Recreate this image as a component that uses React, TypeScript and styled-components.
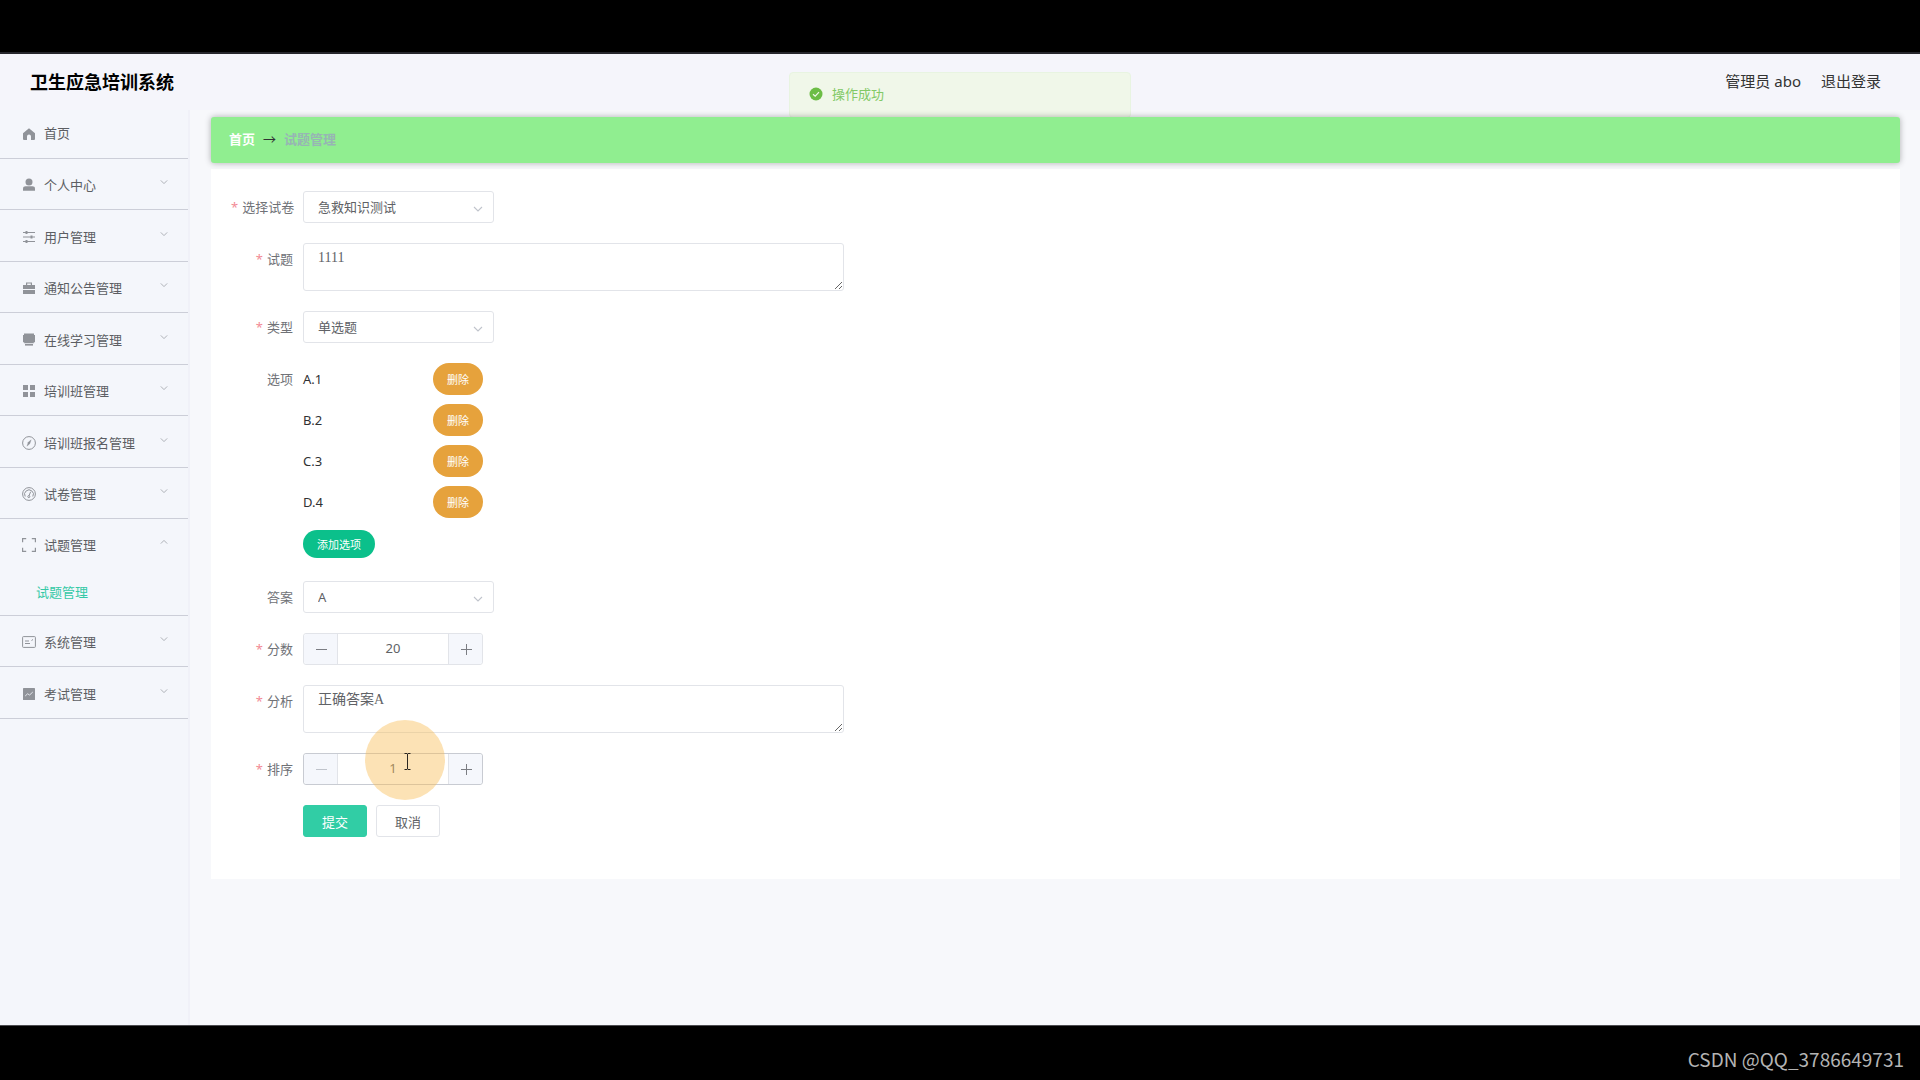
import React, { useState } from 'react';
import styled, { createGlobalStyle, css } from 'styled-components';

const GlobalStyle = createGlobalStyle`
  *, *::before, *::after { box-sizing: border-box; }
  html, body { margin: 0; background: #000; }
  body, button, input, select {
    font-family: "Noto Sans", "Noto Sans CJK SC", sans-serif;
    font-size: 13px;
  }
  body { color: #606266; line-height: 20px; }
  ul { list-style: none; margin: 0; padding: 0; }
  a { text-decoration: none; color: inherit; }
`;

const Screen = styled.div`
  display: flex;
  flex-direction: column;
  min-height: 100vh;
`;

const TopBand = styled.div`
  height: 54px;
  background: #000;
  border-bottom: 2px solid #26262c;
`;

const BottomBand = styled.footer`
  display: flex;
  align-items: center;
  justify-content: flex-end;
  height: 55px;
  padding: 12px 16px 0 0;
  border-top: 1px solid #4c4c50;
  background: #000;
  color: #b4b4b4;
  font-family: "Noto Sans CJK SC", sans-serif;
  font-size: 19px;
`;

const Page = styled.div`
  position: relative;
  display: flex;
  flex-direction: column;
  flex: 1;
  background: #f7f8fb;
`;

const Header = styled.header`
  display: flex;
  align-items: center;
  justify-content: space-between;
  height: 56px;
  padding: 0 39px 0 30px;
  background: #f5f5fb;
`;

const Brand = styled.h1`
  margin: 0;
  color: #000;
  font-size: 18px;
  font-weight: 700;
`;

const UserArea = styled.div`
  display: flex;
  gap: 20px;
  padding-bottom: 2px;
  color: #333;
  font-size: 15px;
`;

const Toast = styled.div`
  position: absolute;
  top: 18px;
  left: 50%;
  display: flex;
  align-items: center;
  gap: 9px;
  width: 342px;
  height: 46px;
  padding: 0 18px 2px 19px;
  transform: translateX(-50%);
  border: 1px solid #e8f4e1;
  border-radius: 4px;
  background: #f0f7e9;
  color: #82c966;
`;

const Columns = styled.div`
  display: flex;
  flex: 1;
`;

const Sidebar = styled.nav`
  width: 190px;
  flex: none;
  background: #f4f6fb;
  border-right: 2px solid #f0f1f8;
`;

const MenuItem = styled.li<{ $leaf?: boolean }>`
  display: flex;
  flex-direction: column;
  justify-content: flex-end;
  min-height: ${(p) => (p.$leaf ? 48 : 51)}px;
  padding-top: ${(p) => (p.$leaf ? 0 : 2)}px;
  border-bottom: 1px solid #ccced8;
  &:nth-child(odd) { min-height: ${(p) => (p.$leaf ? 48 : 52)}px; }
`;

const menuRow = css`
  display: flex;
  align-items: center;
  gap: 8px;
  width: 100%;
  height: 48px;
  padding: 0 20px 2px 22px;
  border: 0;
  background: none;
  color: #5c5e63;
  text-align: left;
  cursor: pointer;
`;
const MenuLink = styled.a`${menuRow}`;
const MenuButton = styled.button`${menuRow}`;
const MenuText = styled.span`flex: 1;`;

const SubLink = styled.a`
  display: flex;
  align-items: center;
  height: 46px;
  padding-left: 36px;
  color: #34c9a6;
`;

const MenuIcon = styled.svg`
  width: 14px;
  height: 14px;
  flex: none;
  margin-top: 2px;
  color: #909399;
`;

const Chevron = styled.svg<{ $up?: boolean }>`
  width: 8px;
  height: 8px;
  flex: none;
  margin-bottom: 4px;
  color: #a4a7ae;
  transform: ${(p) => (p.$up ? 'rotate(180deg)' : 'none')};
`;

const Main = styled.main`
  flex: 1;
  padding: 7px 20px 20px 21px;
`;

const Breadcrumb = styled.div`
  position: relative;
  display: flex;
  align-items: center;
  gap: 8px;
  height: 46px;
  padding: 0 18px 2px;
  border-radius: 3px;
  background: #90ee90;
  box-shadow: 0 0 6px rgba(0, 0, 0, 0.3);
  color: #303133;
`;
const CrumbHome = styled.a`color: #fff; font-weight: 700;`;
const CrumbHere = styled.span`color: #97b5b4; font-weight: 700;`;

const Card = styled.form`
  display: flex;
  flex-direction: column;
  gap: 20px;
  margin-top: 6px;
  padding: 22px 20px 42px;
  background: #fff;
`;

const Field = styled.div`
  display: grid;
  grid-template-columns: 62px minmax(0, 1fr);
  column-gap: 10px;
  align-items: start;
`;

const labelBase = css<{ $required?: boolean }>`
  line-height: 32px;
  text-align: right;
  white-space: nowrap;
  color: #707277;
  ${(p) => p.$required && css`
    &::before { content: "*"; margin-right: 4px; color: #f28b96; }
  `}
`;
const Label = styled.label<{ $required?: boolean }>`${labelBase}`;
const GroupLabel = styled.span<{ $required?: boolean }>`${labelBase}`;

const SelectBox = styled.div`
  position: relative;
  width: 191px;
`;
const SelectInput = styled.select`
  appearance: none;
  width: 100%;
  height: 32px;
  padding: 0 30px 1px 14px;
  border: 1px solid #e2e4e9;
  border-radius: 3px;
  background: #fff;
  color: #606266;
`;
const SelectArrow = styled.svg`
  position: absolute;
  top: 13px;
  right: 11px;
  width: 10px;
  height: 10px;
  color: #c0c4cc;
  pointer-events: none;
`;

const TextArea = styled.textarea`
  display: block;
  width: 100%;
  max-width: 541px;
  height: 48px;
  padding: 5px 14px;
  border: 1px solid #e2e4e9;
  border-radius: 3px;
  background: #fff;
  color: #606266;
  font-family: "Liberation Serif", "Noto Sans CJK SC", serif;
  font-size: 14px;
  line-height: 18px;
  resize: vertical;
`;

const OptionList = styled.ul`
  display: flex;
  flex-direction: column;
  gap: 9px;
  margin-bottom: 12px;
`;
const OptionRow = styled.li`
  display: flex;
  align-items: center;
  justify-content: space-between;
  width: 180px;
  height: 32px;
  color: #303133;
`;
const PillButton = styled.button<{ $tone: 'warning' | 'success' }>`
  height: ${(p) => (p.$tone === 'warning' ? 32 : 28)}px;
  padding: 0 14px 1px;
  border: 0;
  border-radius: 16px;
  background: ${(p) => (p.$tone === 'warning' ? '#e6a23c' : '#0bc08b')};
  color: #fff;
  font-size: 11px;
  cursor: pointer;
`;
const Options = styled.div`padding-bottom: 3px;`;

const Stepper = styled.div<{ $hover?: boolean }>`
  position: relative;
  display: flex;
  width: 180px;
  height: 32px;
  border: 1px solid ${(p) => (p.$hover ? '#c8cbd2' : '#e2e4e9')};
  border-radius: 3px;
`;
const StepButton = styled.button<{ $side: 'left' | 'right' }>`
  display: grid;
  place-items: center;
  width: 34px;
  padding: 0;
  border: 0;
  border-${(p) => (p.$side === 'left' ? 'right' : 'left')}: 1px solid #e2e4e9;
  border-radius: ${(p) => (p.$side === 'left' ? '3px 0 0 3px' : '0 3px 3px 0')};
  background: #f5f7fc;
  color: #7b7d83;
  cursor: pointer;
  &:disabled { color: #c0c4cc; cursor: not-allowed; }
`;
const StepInput = styled.input`
  appearance: textfield;
  flex: 1;
  min-width: 0;
  padding: 0 0 2px;
  border: 0;
  background: #fff;
  color: #606266;
  text-align: center;
  &::-webkit-inner-spin-button { appearance: none; margin: 0; }
`;

const ClickHalo = styled.svg`
  position: absolute;
  top: -34px;
  left: 61px;
  width: 80px;
  height: 80px;
  pointer-events: none;
`;

const Actions = styled.div`
  grid-column: 2;
  display: flex;
  gap: 9px;
`;
const FormButton = styled.button<{ $primary?: boolean }>`
  width: 64px;
  height: 32px;
  padding: 0;
  border: 1px solid ${(p) => (p.$primary ? '#31cda5' : '#e2e4e9')};
  border-radius: 3px;
  background: ${(p) => (p.$primary ? '#31cda5' : '#fff')};
  color: ${(p) => (p.$primary ? '#fff' : '#606266')};
  cursor: pointer;
`;

const line = { fill: 'none', stroke: 'currentColor', strokeWidth: 1 };

const icons: Record<string, React.ReactNode> = {
  home: <path fill="currentColor" d="M7 1.2 13 6.2V12a1 1 0 0 1-1 1H9V9.6a2 2 0 0 0-4 0V13H2a1 1 0 0 1-1-1V6.2z" />,
  user: (
    <g fill="currentColor">
      <circle cx="7" cy="4" r="3.5" />
      <path d="M1 12.8v-2.2C1 9 2.2 8.2 3.6 8.2h6.8c1.4 0 2.6.8 2.6 2.4v2.2z" />
    </g>
  ),
  sliders: (
    <g {...line}>
      <path d="M1 2.5h12M1 7h12M1 11.5h12" />
      <path strokeWidth="2" d="M4.5 1v3M9.5 5.5v3M4.5 10v3" />
    </g>
  ),
  briefcase: (
    <g fill="currentColor">
      <path d="M4 4V1.5h6V4h3v4H1V4zm1.2 0h3.6V2.6H5.2z" fillRule="evenodd" />
      <path d="M1 9h12v4H1z" />
    </g>
  ),
  printer: (
    <g fill="currentColor">
      <path d="M2 .6h10V2H2zM1 2h12v7.2h-1.2v1H2.2v-1H1z" />
      <path d="M3 11h8v1.6H3z" />
    </g>
  ),
  grid: <path fill="currentColor" d="M1 1h5v5H1zM8 1h5v5H8zM1 8h5v5H1zM8 8h5v5H8z" />,
  compass: (
    <g {...line}>
      <circle cx="7" cy="7" r="6.4" />
      <path fill="currentColor" d="M9.2 3.8 7.8 7.8 4.9 10.2 6.2 6.3z" strokeWidth=".3" />
    </g>
  ),
  gauge: (
    <g {...line}>
      <circle cx="7" cy="7" r="6.4" />
      <path d="M3.2 9.5A4.4 4.4 0 1 1 10.8 9.5" />
      <path d="M8.6 4.8 7 8.8" />
      <circle cx="6.8" cy="9.6" r="1" />
    </g>
  ),
  frame: <path {...line} strokeWidth="1.2" d="M.6 4.2V.6h3.6M9.8.6h3.6v3.6M13.4 9.8v3.6H9.8M4.2 13.4H.6V9.8" />,
  postcard: (
    <g {...line}>
      <rect x=".6" y="1.6" width="12.8" height="10.8" rx=".8" />
      <path d="M3 6h4M3 8.5h5M9.5 5.5l1.5-1" />
    </g>
  ),
  chart: (
    <g>
      <rect x="1" y="1" width="12" height="12" rx=".6" fill="currentColor" />
      <path d="M3.2 9 5.6 6.8 7.6 8 10.8 5" fill="none" stroke="#e4e6ec" />
    </g>
  ),
};

const chevronPath = <path d="M1 3 5 7 9 3" fill="none" stroke="currentColor" strokeWidth="1.1" />;

const menu = [
  { icon: 'home', text: '首页', leaf: true },
  { icon: 'user', text: '个人中心' },
  { icon: 'sliders', text: '用户管理' },
  { icon: 'briefcase', text: '通知公告管理' },
  { icon: 'printer', text: '在线学习管理' },
  { icon: 'grid', text: '培训班管理' },
  { icon: 'compass', text: '培训班报名管理' },
  { icon: 'gauge', text: '试卷管理' },
  { icon: 'frame', text: '试题管理', children: ['试题管理'] },
  { icon: 'postcard', text: '系统管理' },
  { icon: 'chart', text: '考试管理' },
];

function SideMenu() {
  return (
    <Sidebar>
      <ul>
        {menu.map((m) => {
          const Row: React.ElementType = m.leaf ? MenuLink : MenuButton;
          const rowProps = m.leaf ? { href: '#home' } : { type: 'button', 'aria-expanded': !!m.children };
          return (
            <MenuItem key={m.text} $leaf={m.leaf}>
              <Row {...rowProps}>
                <MenuIcon viewBox="0 0 14 14" aria-hidden="true">{icons[m.icon]}</MenuIcon>
                <MenuText>{m.text}</MenuText>
                {!m.leaf && (
                  <Chevron $up={!!m.children} viewBox="0 0 10 10" aria-hidden="true">{chevronPath}</Chevron>
                )}
              </Row>
              {m.children?.map((c) => <SubLink key={c} href="#questions">{c}</SubLink>)}
            </MenuItem>
          );
        })}
      </ul>
    </Sidebar>
  );
}

function SelectField({ id, label, required, options }: {
  id: string; label: string; required?: boolean; options: string[];
}) {
  return (
    <Field>
      <Label htmlFor={id} $required={required}>{label}</Label>
      <SelectBox>
        <SelectInput id={id}>
          {options.map((o) => <option key={o}>{o}</option>)}
        </SelectInput>
        <SelectArrow viewBox="0 0 10 10" aria-hidden="true">{chevronPath}</SelectArrow>
      </SelectBox>
    </Field>
  );
}

function TextField({ id, label, value }: { id: string; label: string; value: string }) {
  return (
    <Field>
      <Label htmlFor={id} $required>{label}</Label>
      <TextArea id={id} defaultValue={value} />
    </Field>
  );
}

function NumberField({ id, label, initial, min, hover, children }: {
  id: string; label: string; initial: number; min: number; hover?: boolean; children?: React.ReactNode;
}) {
  const [value, setValue] = useState(initial);
  return (
    <Field>
      <Label htmlFor={id} $required>{label}</Label>
      <Stepper $hover={hover}>
        <StepButton type="button" $side="left" aria-label="减少" disabled={value <= min} onClick={() => setValue(value - 1)}>
          <svg width="12" height="12" aria-hidden="true"><path d="M1 6.5h11" stroke="currentColor" /></svg>
        </StepButton>
        <StepInput id={id} type="number" value={value} onChange={(e) => setValue(Number(e.target.value))} />
        <StepButton type="button" $side="right" aria-label="增加" onClick={() => setValue(value + 1)}>
          <svg width="12" height="12" aria-hidden="true"><path d="M1 6.5h11M6.5 1v11" stroke="currentColor" /></svg>
        </StepButton>
        {children}
      </Stepper>
    </Field>
  );
}

export default function App() {
  const [options, setOptions] = useState(['A.1', 'B.2', 'C.3', 'D.4']);
  return (
    <Screen>
      <GlobalStyle />
      <TopBand />
      <Page>
        <Header>
          <Brand>卫生应急培训系统</Brand>
          <UserArea>
            <span>管理员 abo</span>
            <a href="#logout">退出登录</a>
          </UserArea>
        </Header>
        <Toast role="status">
          <svg width="14" height="14" viewBox="0 0 14 14" aria-hidden="true">
            <circle cx="7" cy="7" r="6.5" fill="#6cbd45" />
            <path d="M4 7.2 6.2 9.2 10 5.2" fill="none" stroke="#f0f7e9" strokeWidth="1.2" />
          </svg>
          <span>操作成功</span>
        </Toast>
        <Columns>
          <SideMenu />
          <Main>
            <Breadcrumb>
              <CrumbHome href="#home">首页</CrumbHome>
              <span>→</span>
              <CrumbHere>试题管理</CrumbHere>
            </Breadcrumb>
            <Card onSubmit={(e) => e.preventDefault()}>
              <SelectField id="paper" label="选择试卷" required options={['急救知识测试']} />
              <TextField id="question" label="试题" value="1111" />
              <SelectField id="kind" label="类型" required options={['单选题', '多选题', '判断题', '填空题']} />
              <Field>
                <GroupLabel>选项</GroupLabel>
                <Options>
                  <OptionList>
                    {options.map((o) => (
                      <OptionRow key={o}>
                        <span>{o}</span>
                        <PillButton type="button" $tone="warning" onClick={() => setOptions(options.filter((x) => x !== o))}>
                          删除
                        </PillButton>
                      </OptionRow>
                    ))}
                  </OptionList>
                  <PillButton type="button" $tone="success">添加选项</PillButton>
                </Options>
              </Field>
              <SelectField id="answer" label="答案" options={['A', 'B', 'C', 'D']} />
              <NumberField id="score" label="分数" initial={20} min={0} />
              <TextField id="analysis" label="分析" value="正确答案A" />
              <NumberField id="order" label="排序" initial={1} min={1} hover>
                <ClickHalo viewBox="0 0 80 80" aria-hidden="true">
                  <circle cx="40" cy="40" r="40" fill="#f8bb54" fillOpacity=".43" />
                  <path d="M39.5 33.5h2.5l.5.5.5-.5h2.5M42.5 34v15M39.5 49.5h2.5l.5-.5.5.5h2.5" fill="none" stroke="#2b2620" />
                </ClickHalo>
              </NumberField>
              <Field>
                <Actions>
                  <FormButton type="submit" $primary>提交</FormButton>
                  <FormButton type="button">取消</FormButton>
                </Actions>
              </Field>
            </Card>
          </Main>
        </Columns>
      </Page>
      <BottomBand>CSDN @QQ_3786649731</BottomBand>
    </Screen>
  );
}
